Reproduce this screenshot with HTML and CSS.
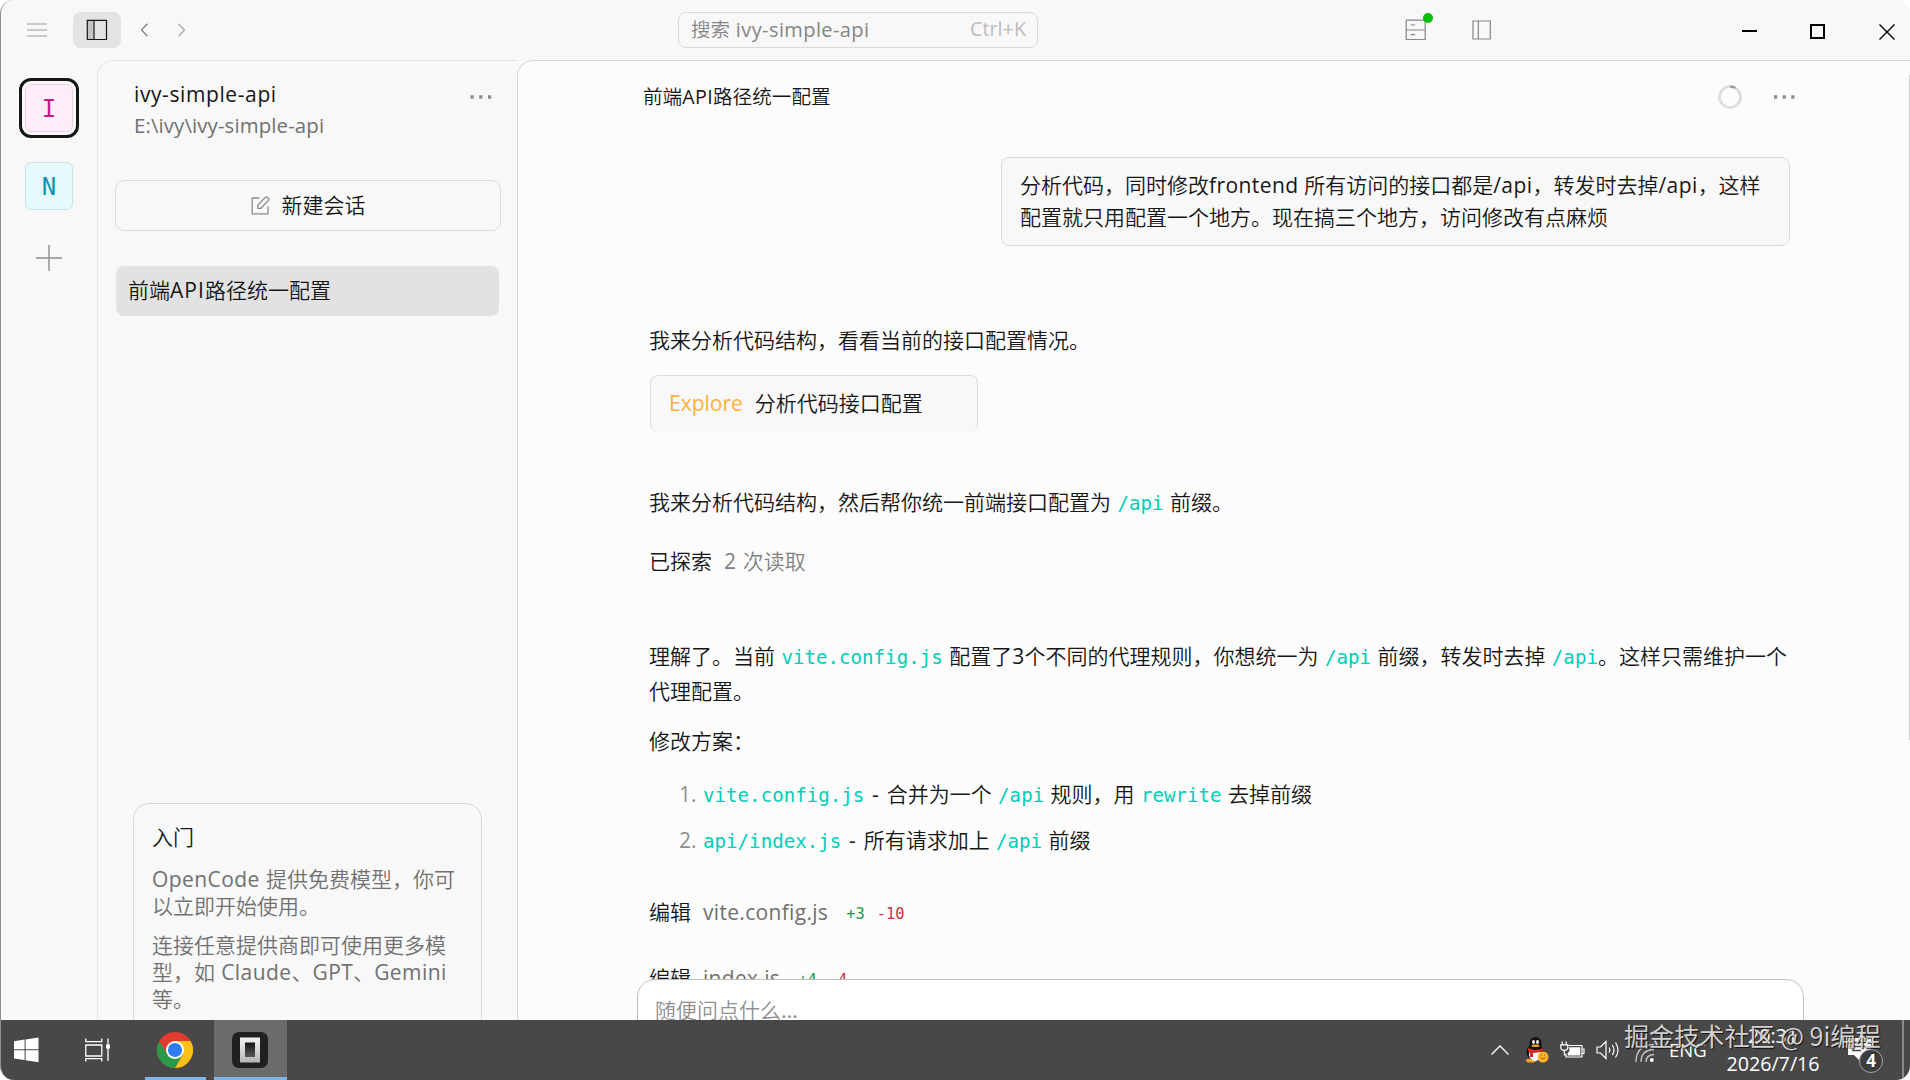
FILE: index.html
```html
<!DOCTYPE html>
<html lang="zh-CN">
<head>
<meta charset="utf-8">
<title>ivy-simple-api</title>
<link rel="stylesheet" href="styles.css">
</head>
<body>
<div class="window">
  <header class="titlebar">
    <div class="tb-left">
      <svg class="ic-menu" width="20" height="16" viewBox="0 0 20 16" stroke="#b9b9b9" stroke-width="1.7"><path d="M0 2h20M0 8h20M0 14h20"/></svg>
      <button class="toggle" aria-label="侧边栏"><svg width="22" height="22" viewBox="0 0 22 22" fill="none" stroke="#161616" stroke-width="1.2"><path d="M1.6 1.6h6v18.8h-6z" fill="#c4c4c4" stroke="none"/><path d="M1.3 1.3h19.2v19.2H1.3zM8 1.3v19.2"/></svg></button>
      <svg class="ic-back" width="9" height="14" viewBox="0 0 9 14" fill="none" stroke="#858585" stroke-width="1.4"><path d="M7.5 .8 1.5 7l6 6.2"/></svg>
      <svg class="ic-fwd" width="9" height="14" viewBox="0 0 9 14" fill="none" stroke="#adadad" stroke-width="1.4"><path d="M1.5 .8l6 6.2-6 6.2"/></svg>
    </div>
    <div class="search"><span>搜索 <i class="lat s-name">ivy-simple-api</i></span><span class="kbd">Ctrl+K</span></div>
    <div class="tb-right">
      <div class="server"><svg width="22" height="22" viewBox="0 0 22 22" fill="none" stroke="#858585" stroke-width="1.2"><path d="M1.2 1.2h19v19.3h-19zM1.2 11h19M5.500 6h4.600M5.500 15.600h4.600"/></svg><b class="dot"></b></div>
      <svg class="ic-panel" width="20" height="20" viewBox="0 0 20 20" fill="none" stroke="#858585" stroke-width="1.2"><path d="M1 1h17.300v18H1zM6.300 1v18"/></svg>
      <div class="winctl">
        <svg width="16" height="16" viewBox="0 0 16 16"><path d="M1 6h15v2H1z"/></svg>
        <svg width="16" height="16" viewBox="0 0 16 16" fill="none" stroke="#000" stroke-width="2"><path d="M1 1h13v13H1z"/></svg>
        <svg width="16" height="16" viewBox="0 0 16 16" fill="none" stroke="#000" stroke-width="1.400"><path d="M.5.500l15 15M15.500.500l-15 15"/></svg>
      </div>
    </div>
  </header>
  <div class="body">
    <nav class="rail">
      <div class="ring"><div class="tile pink">I</div></div>
      <div class="tile cyan">N</div>
      <svg class="plus" width="26" height="26" viewBox="0 0 26 26" stroke="#8c8c8c" stroke-width="1.400"><path d="M0 13h26M13 0v26"/></svg>
    </nav>
    <aside class="side">
      <div class="proj">
        <div>
          <div class="pname"><span class="lat">ivy-simple-api</span></div>
          <div class="ppath"><span class="lat">E:\ivy\ivy-simple-api</span></div>
        </div>
        <svg class="dots" width="22" height="4" viewBox="0 0 22 4" fill="#8c8c8c"><path d="M.5.300h3.200v3.400H.5zM9.200.300h3.200v3.400H9.200zM18 .300h3.200v3.400H18z"/></svg>
      </div>
      <button class="newbtn"><svg width="19" height="19" viewBox="0 0 19 19" fill="none" stroke="#8c8c8c" stroke-width="1.300"><path d="M8.500 2H1.200v15.800H17v-7.300"/><path d="M6.800 12.300V9L14.500 1.300q1-.8 2.100.2l.8.800q1 1.100.1 2.100L10 12.300z"/></svg><span>新建会话</span></button>
      <div class="session">前端<span class="lat">API</span>路径统一配置</div>
      <section class="start">
        <h3>入门</h3>
        <p><span class="lat">OpenCode</span> 提供免费模型，你可<br>以立即开始使用。</p>
        <p>连接任意提供商即可使用更多模<br>型，如 <span class="lat">Claude</span>、<span class="lat">GPT</span>、<span class="lat">Gemini</span><br>等。</p>
      </section>
    </aside>
    <main class="chat">
      <div class="chead">
        <h2>前端<span class="lat">API</span>路径统一配置</h2>
        <div class="cacts">
          <svg width="24" height="24" viewBox="0 0 24 24" fill="none" stroke-width="2.600"><circle cx="12" cy="12" r="10.500" stroke="#dcdcdc"/><path d="M12.200 1.500a10.500 10.500 0 0 1 5 1.400" stroke="#9a9a9a"/></svg>
          <svg width="22" height="4" viewBox="0 0 22 4" fill="#8c8c8c"><path d="M0 .300h3.200v3.400H0zM8.600.300h3.200v3.400H8.600zM17.200.300h3.200v3.400h-3.200z"/></svg>
        </div>
      </div>
      <div class="bubble">分析代码，同时修改<span class="lat">frontend</span> 所有访问的接口都是<span class="lat">/api</span>，转发时去掉<span class="lat">/api</span>，这样<br>配置就只用配置一个地方。现在搞三个地方，访问修改有点麻烦</div>
      <div class="msgs">
        <p class="p1">我来分析代码结构，看看当前的接口配置情况。</p>
        <div class="task"><span class="lat agent">Explore</span><span>分析代码接口配置</span></div>
        <p class="p2">我来分析代码结构，然后帮你统一前端接口配置为 <code>/api</code> 前缀。</p>
        <div class="explored"><span>已探索</span><span class="muted"><span class="lat">2</span> 次读取</span></div>
        <p class="p3">理解了。当前 <code>vite.config.js</code> 配置了<span class="lat">3</span>个不同的代理规则，你想统一为 <code>/api</code> 前缀，转发时去掉 <code>/api</code>。这样只需维护一个<br>代理配置。</p>
        <p class="p4">修改方案：</p>
        <ol>
          <li><span class="num lat">1.</span><code>vite.config.js</code><span class="lat"> - </span>合并为一个 <code>/api</code> 规则，用 <code>rewrite</code> 去掉前缀</li>
          <li><span class="num lat">2.</span><code>api/index.js</code><span class="lat"> - </span>所有请求加上 <code>/api</code> 前缀</li>
        </ol>
        <div class="edit e1"><span>编辑</span><span class="lat file">vite.config.js</span><span class="add">+3</span><span class="del">-10</span></div>
        <div class="edit e2"><span>编辑</span><span class="lat file">index.js</span><span class="add">+4</span><span class="del">-4</span></div>
      </div>
      <div class="composer">随便问点什么...</div>
      <div class="scrollbar"></div>
    </main>
  </div>
  <footer class="taskbar">
    <svg class="t-win" width="25" height="26" viewBox="0 0 25 26" fill="#fff"><path d="M0 4.200 10.600 2.600v9.700H0zM11.600 2.400 24.500.500v11.800H11.600zM0 13.300h10.600V23L0 21.500zM11.600 13.300h12.900v12L11.600 23.200z"/></svg>
    <svg class="t-view" width="26" height="24" viewBox="0 0 26 24" fill="none" stroke="#fff" stroke-width="1.300"><path d="M.8.500v3.200h16V.500M.8 7h16v11H.8zM.8 23.500v-2.800h16v2.800M23 .500v22.500"/><path d="M21 6.500h4v4h-4z" fill="#fff" stroke="none"/></svg>
    <div class="app chrome">
      <svg width="36" height="36" viewBox="0 0 48 48"><circle cx="24" cy="24" r="24" fill="#e33b2e"/><path d="M3.200 12A24 24 0 0 0 24 48L34.400 30 13.600 30z" fill="#2b9a47"/><path d="M24 48A24 24 0 0 0 44.800 12H24l10.400 18z" fill="#fbc116"/><circle cx="24" cy="24" r="12" fill="#fff"/><circle cx="24" cy="24" r="9.400" fill="#2f7cf0"/></svg>
    </div>
    <div class="app active">
      <svg width="36" height="36" viewBox="0 0 36 36"><defs><linearGradient id="g" x2="0" y2="1"><stop offset="0" stop-color="#f4f4f4"/><stop offset="1" stop-color="#b5b5b5"/></linearGradient><linearGradient id="h" x2="0" y2="1"><stop offset="0" stop-color="#151515"/><stop offset="1" stop-color="#575757"/></linearGradient></defs><rect width="36" height="36" rx="7" fill="#202020"/><path d="M8 5.500h20v25H8z" fill="url(#g)"/><path d="M13 10.500h10V25H13z" fill="url(#h)"/></svg>
    </div>
    <div class="tray">
      <svg class="y-up" width="18" height="10" viewBox="0 0 18 10" fill="none" stroke="#fff" stroke-width="1.300"><path d="M.5 9.500 9 1l8.500 8.500"/></svg>
      <svg class="y-qq" width="24" height="26" viewBox="0 0 24 26"><ellipse cx="6" cy="23.500" rx="5" ry="2" fill="#f4a51c"/><ellipse cx="10" cy="15" rx="8.500" ry="8.500" fill="#111"/><ellipse cx="10" cy="17.500" rx="6" ry="6.500" fill="#fff"/><ellipse cx="10.500" cy="7" rx="6.300" ry="7" fill="#111"/><ellipse cx="8.500" cy="5" rx="1.400" ry="2" fill="#fff"/><ellipse cx="12.500" cy="5" rx="1.400" ry="2" fill="#fff"/><ellipse cx="10.500" cy="8.800" rx="4" ry="1.200" fill="#f4a51c"/><path d="M3 11q7.500 4 15 0v3q-5 2-10 2v4H5v-5l-2-1z" fill="#dc2525"/><circle cx="18" cy="20" r="5.500" fill="#fbb52b"/><path d="M15.500 20.500q2.500 3 5 0M15.800 18h1.200M19 18h1.200" stroke="#a45a0b" fill="none"/></svg>
      <svg class="y-bat" width="25" height="18" viewBox="0 0 25 18" fill="none" stroke="#fff" stroke-width="1.200"><path d="M8.500 4.500H22v11.500H6v-3.500M22.500 8h1.500v4.500h-1.500"/><path d="M9 6.200h11.300v8.200H7.800V12l1.700-2z" fill="#fff" stroke="none"/><path d="M2.200.500v3M6.200.500v3M.8 3.800h7v3q0 2.500-3.500 2.500T.8 6.800zM4.300 9.300v4.700H6"/></svg>
      <svg class="y-vol" width="24" height="20" viewBox="0 0 24 20" fill="none" stroke="#fff" stroke-width="1.200"><path d="M1 7h3.500L10 1.500v17L4.500 13H1zM13 7.500q1.700 2.500 0 5M16.300 5q3.400 5 0 10M19.500 2.500q5 7.500 0 15"/></svg>
      <svg class="y-net" width="20" height="20" viewBox="0 0 20 20" fill="none" stroke="#c9c9c9" stroke-width="1.300"><path d="M1 19Q1 2 19 1.500M6 19Q6 7 19 6.500M11 19Q11 12 19 11.500"/><circle cx="16.800" cy="17" r="1.900" fill="#fff" stroke="none"/></svg>
      <span class="eng">ENG</span>
      <div class="clock"><span class="time">20:31</span><span class="date">2026/7/16</span></div>
      <div class="notif"><svg width="26" height="26" viewBox="0 0 26 26"><path d="M1 1h23v17h-9l-3 5-5-5H1z" fill="#fff"/><path d="M5 5.500h14M5 9.500h14M5 13.500h9" stroke="#484848" stroke-width="1.300"/></svg><b class="badge">4</b></div>
      <div class="desk"></div>
    </div>
    <div class="mark">掘金技术社区 @ 9i编程</div>
  </footer>
</div>
</body>
</html>
```
FILE: styles.css
```css
* { box-sizing: border-box; margin: 0; padding: 0; }
body {
  width: 1910px; height: 1080px; overflow: hidden; background: #fff;
  font-family: "Noto Sans CJK SC", sans-serif; font-weight: 350; font-size: 21px; color: #161616;
}
button { font: inherit; color: inherit; background: none; border: 0; }
svg { display: block; flex: none; }
.lat { font-family: "Open Sans", "Noto Sans", sans-serif; font-size: 1em; line-height: 1; font-weight: 400; font-style: normal; letter-spacing: .02em; }
code { font-family: "DejaVu Sans Mono", monospace; font-size: 19.1px; letter-spacing: .03px; line-height: 1; font-weight: 400; color: #00ceb9; }

.window {
  position: relative; width: 1910px; height: 1080px; display: flex; flex-direction: column;
  background: #f8f8f8; border-left: 1px solid #8f8f8f; border-radius: 14px; overflow: hidden;
}

/* title bar */
.titlebar { height: 60px; flex: none; display: flex; align-items: center; }
.tb-left { display: flex; align-items: center; width: 677px; padding-left: 26px; }
.toggle { width: 48px; height: 36px; margin-left: 26px; border-radius: 8px; background: #e3e3e3; display: flex; align-items: center; justify-content: center; }
.ic-back { margin-left: 19px; }
.ic-fwd { margin-left: 28px; }
.search {
  width: 360px; height: 36px; border: 1px solid #d9d9d9; border-radius: 8px; padding: 0 11px 2px 12px;
  display: flex; align-items: center; justify-content: space-between; color: #858585; font-size: 19.5px; line-height: 32px; word-spacing: 1.5px;
}
.s-name { font-size: 20px; letter-spacing: .4px; }
.kbd { font-family: "Open Sans", sans-serif; font-size: 19.8px; color: #bdbdbd; font-weight: 400; }
.tb-right { flex: 1; display: flex; align-items: center; padding-left: 367px; }
.server { position: relative; }
.dot { position: absolute; left: 18px; top: -6px; width: 10px; height: 10px; border-radius: 50%; background: #0abf0a; }
.ic-panel { margin-left: 45px; }
.winctl { display: flex; gap: 53px; margin-left: 249px; padding-top: 3px; }

/* body */
.body { flex: none; height: 960px; display: flex; }
.rail { width: 96px; flex: none; display: flex; flex-direction: column; align-items: center; padding-top: 18px; }
.ring { width: 60px; height: 60px; border: 3px solid #161616; border-radius: 12px; display: flex; align-items: center; justify-content: center; }
.tile { width: 48px; height: 48px; padding-top: 1px; border-radius: 6px; display: flex; align-items: center; justify-content: center; font: 400 24px "DejaVu Sans Mono", monospace; }
.pink { background: #feecf8; border: 1px solid #e8d3e2; color: #c41c8b; }
.cyan { background: #e5fafd; border: 1px solid #c8e3e7; color: #1392b0; margin-top: 24px; }
.plus { margin-top: 35px; }

.side {
  width: 420px; flex: none; height: 960px; border-left: 1px solid #e4e4e4; border-top: 1px solid #e4e4e4;
  border-top-left-radius: 16px; padding: 19px 16px 0 17px; display: flex; flex-direction: column; overflow: hidden;
}
.proj { display: flex; flex: none; justify-content: space-between; padding: 0 9px 0 19px; height: 60px; }
.pname, .ppath { height: 30px; line-height: 26px; font-size: 21px; white-space: nowrap; }
.pname .lat { letter-spacing: .6px; }
.ppath { color: #707070; margin-top: 1px; font-size: 20.4px; }
.ppath .lat { letter-spacing: .12px; }
.dots { margin-top: 15px; }
.newbtn {
  flex: none; margin-top: 40px; height: 51px; border: 1.5px solid #dadada; border-radius: 9px;
  display: flex; align-items: center; justify-content: center; gap: 12px;
}
.newbtn span { padding-bottom: 3px; }
.session { flex: none; margin: 35px 2px 0 1px; height: 50px; border-radius: 8px; background: #e2e2e2; padding-left: 12px; line-height: 47px; white-space: nowrap; }
.session .lat { letter-spacing: .05em; }
.start { margin: 487px 19px 0 18px; height: 240px; flex: none; border: 1.5px solid #d8d8d8; border-radius: 16px; padding: 17px 0 0 18px; line-height: 27px; white-space: nowrap; color: #707070; font-size: 21px; word-spacing: 1.5px; }
.start h3 { font-size: 21px; font-weight: inherit; color: #161616; line-height: 30px; }
.start p { margin-top: 12px; }
.start h3 + p { margin-top: 14px; }

/* conversation */
.chat {
  position: relative; flex: 1; height: 960px; overflow: hidden; background: #fcfcfc;
  border-top: 1px solid #d6d6d6; border-left: 1px solid #d6d6d6; border-top-left-radius: 16px;
}
.chead { height: 72px; padding: 0 114px 0 125px; display: flex; align-items: center; justify-content: space-between; }
.chead h2 { font-size: 19.6px; line-height: 30px; padding-bottom: 2px; font-weight: inherit; white-space: nowrap; }
.cacts { display: flex; align-items: center; gap: 32px; }
.bubble {
  width: 789px; height: 89px; margin: 24px 0 0 483px; border: 1px solid #dadada; border-radius: 8px; background: #f8f8f8;
  padding: 10px 0 0 18px; line-height: 32px; white-space: nowrap; font-size: 21px; word-spacing: 1px;
}
.msgs { padding-left: 131px; white-space: nowrap; font-size: 21px; line-height: 35px; word-spacing: 1.7px; }
.p1 { margin-top: 76px; }
.task {
  width: 328px; height: 57px; margin: 18px 0 0 1px; border: 1px solid #dcdcdc; border-bottom: 0; border-radius: 8px; background: #f8f8f8;
  padding: 0 0 3px 18px; display: flex; align-items: baseline; gap: 12px; line-height: 52px;
}
.agent { color: #fcb03e; letter-spacing: 0; }
.p2 { margin-top: 52px; }
.explored { margin-top: 26px; line-height: 30px; display: flex; gap: 12px; }
.muted { color: #808080; }
.p3 { margin-top: 63px; }
.p4 { margin-top: 15px; }
ol { list-style: none; margin-top: 18px; }
li { padding-left: 30px; display: block; }
li + li { margin-top: 11px; }
.num { display: inline-block; width: 24px; color: #8f8f8f; letter-spacing: 0; }
.edit { height: 30px; line-height: 30px; display: flex; align-items: baseline; }
.e1 { margin-top: 39px; }
.e2 { margin-top: 36px; }
.file { margin-left: 12px; color: #707070; letter-spacing: .015em; }
.add, .del { position: relative; top: -1px; font: 400 15.4px/1 "DejaVu Sans Mono", monospace; }
.add { color: #139a4b; margin-left: 18px; }
.del { color: #cb2f45; margin-left: 12px; }
.composer {
  position: absolute; left: 119px; top: 918px; width: 1167px; height: 120px; background: #fff;
  border: 1.5px solid #bfbfbf; border-radius: 18px; padding: 13px 17px; line-height: 32px; font-size: 21px; color: #8f8f8f;
}
.scrollbar { position: absolute; right: 0; top: 14px; width: 1px; height: 665px; background: #cfcfcf; }

/* taskbar */
.taskbar { position: relative; height: 60px; flex: none; background: #484848; color: #fff; display: flex; align-items: center; margin-left: -1px; }
.t-win { margin-left: 14px; }
.t-view { margin-left: 46px; }
.app { height: 60px; display: flex; align-items: center; justify-content: center; border-bottom: 3px solid #7cb7ea; padding: 3px 1px 0 0; }
.chrome { width: 61px; margin-left: 34px; padding-right: 2px; }
.active { width: 73px; margin-left: 8px; background: #6b6b6b; padding-right: 2px; }
.tray { margin-left: auto; height: 60px; display: flex; align-items: center; }
.y-qq { margin-left: 16px; }
.y-bat { margin-left: 11px; }
.y-vol { margin-left: 11px; }
.y-net { margin-left: 15px; margin-top: 5px; }
.eng { width: 38px; margin-left: 14px; font: 400 18.5px/24px "Open Sans", sans-serif; }
.clock { width: 96px; margin-left: 18px; display: flex; flex-direction: column; align-items: center; font: 400 19.7px/28px "Open Sans", sans-serif; padding-bottom: 1px; }
.notif { position: relative; margin-left: 26px; }
.badge { position: absolute; left: 12px; top: 12px; width: 24px; height: 24px; border: 1px solid #a8a8a8; border-radius: 50%; background: #3c3c3c; font: 700 17px/22px "Open Sans", sans-serif; text-align: center; }
.desk { width: 2px; height: 60px; background: #8a8a8a; margin: 0 6px 0 29px; }
.mark { position: absolute; left: 1624px; top: -1px; font-size: 25.1px; line-height: 33px; font-weight: 400; color: #d2cfd0; white-space: nowrap; text-shadow: 1px 1px 1px #111; }
```
